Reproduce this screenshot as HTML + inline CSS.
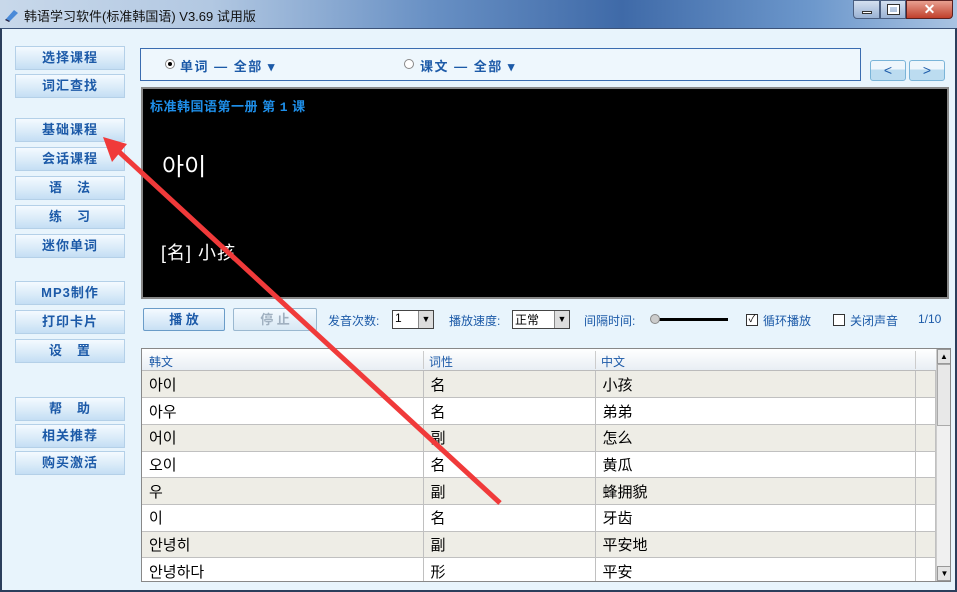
<!DOCTYPE html>
<html><head><meta charset="utf-8"><style>
*{margin:0;padding:0;box-sizing:border-box}
body{width:957px;height:592px;overflow:hidden;position:relative;font-family:"Liberation Sans","Noto Sans CJK SC",sans-serif;background:#e8f4fc}
.title{position:absolute;left:0;top:0;width:957px;height:29px;background:linear-gradient(90deg,#c8d8ea 0%,#b2c8e2 22%,#6890c4 45%,#3f6aa8 65%,#6d98cc 85%,#a9c3e2 100%)}
.title span{position:absolute;left:24px;top:6px;font-size:13px;color:#111}
.frame{position:absolute;left:0;top:28px;width:957px;height:564px;border:2px solid #2b3e5c;border-top:1px solid #3b5278;background:#e8f4fc}
.btn{position:absolute;left:15px;width:110px;height:24px;border:1px solid #b4d0e8;background:linear-gradient(#f4faff,#d8eaf8 60%,#c4def4);color:#1c5aa8;font-weight:bold;font-size:13px;text-align:center;line-height:22px;letter-spacing:1px}
.abs{position:absolute}
.blk{position:absolute;left:141px;top:87px;width:808px;height:212px;background:#000;border:2px solid #888}
table{border-collapse:collapse;font-size:15px}
td{height:26.7px;border-bottom:1px solid #c0c0c0;border-right:1px solid #c0c0c0;padding-left:7px}
tr:nth-child(odd) td{background:#eeede6}
tr:nth-child(even) td{background:#fff}
</style></head><body>
<div class="title"><svg class="abs" style="left:4px;top:7px" width="16" height="16"><path d="M2 12 L10 3 L14 6 L6 14Z" fill="#4a8ad8"/><path d="M2 12 L6 14 L5 15 L1 13Z" fill="#224"/></svg><span>韩语学习软件(标准韩国语) V3.69 试用版</span>
<div class="abs" style="left:853px;top:0;width:27px;height:19px;border:1px solid #4a5e80;border-radius:0 0 0 4px;background:linear-gradient(#d4e0f0,#9ab2d4)"><div class="abs" style="left:8px;top:10px;width:10px;height:3px;background:#fff;border:1px solid #333"></div></div>
<div class="abs" style="left:880px;top:0;width:26px;height:19px;border:1px solid #4a5e80;background:linear-gradient(#d4e0f0,#9ab2d4)"><div class="abs" style="left:7px;top:4px;width:11px;height:9px;border:2px solid #fff;outline:1px solid #333"></div></div>
<div class="abs" style="left:906px;top:0;width:47px;height:19px;border:1px solid #5a2020;border-radius:0 0 4px 0;background:linear-gradient(#e8a090,#c0402c);color:#fff;font-weight:bold;text-align:center;font-size:14px;line-height:17px">✕</div>
</div>
<div class="frame"></div>
<div class="btn" style="top:46px">选择课程</div>
<div class="btn" style="top:74px">词汇查找</div>
<div class="btn" style="top:118px">基础课程</div>
<div class="btn" style="top:147px">会话课程</div>
<div class="btn" style="top:176px">语　法</div>
<div class="btn" style="top:205px">练　习</div>
<div class="btn" style="top:234px">迷你单词</div>
<div class="btn" style="top:281px">MP3制作</div>
<div class="btn" style="top:310px">打印卡片</div>
<div class="btn" style="top:339px">设　置</div>
<div class="btn" style="top:397px">帮　助</div>
<div class="btn" style="top:424px">相关推荐</div>
<div class="btn" style="top:451px">购买激活</div>

<div class="abs" style="left:140px;top:48px;width:721px;height:33px;border:1px solid #3a6cb0;background:#eef7fd"></div>
<div class="abs" style="left:165px;top:59px;width:10px;height:10px;border:1px solid #888;border-radius:50%;background:#fff"><div class="abs" style="left:2px;top:2px;width:4px;height:4px;border-radius:50%;background:#000"></div></div>
<div class="abs" style="left:180px;top:56px;font-size:13px;font-weight:bold;color:#1c5aa8;letter-spacing:1.5px">单词 — 全部 ▾</div>
<div class="abs" style="left:404px;top:59px;width:10px;height:10px;border:1px solid #888;border-radius:50%;background:#fff"></div>
<div class="abs" style="left:420px;top:56px;font-size:13px;font-weight:bold;color:#1c5aa8;letter-spacing:1.5px">课文 — 全部 ▾</div>
<div class="abs" style="left:870px;top:60px;width:36px;height:21px;border:1px solid #7ab4d8;border-radius:3px;background:linear-gradient(#eef6fc 45%,#bcdcf0 46%);color:#1c5aa8;text-align:center;font-size:14px;line-height:19px">&lt;</div>
<div class="abs" style="left:909px;top:60px;width:36px;height:21px;border:1px solid #7ab4d8;border-radius:3px;background:linear-gradient(#eef6fc 45%,#bcdcf0 46%);color:#1c5aa8;text-align:center;font-size:14px;line-height:19px">&gt;</div>

<div class="blk">
<div class="abs" style="left:7px;top:7px;color:#1e8ee8;font-weight:bold;font-size:13px;letter-spacing:0.5px">标准韩国语第一册 第 <span style="font-family:'Liberation Mono',monospace">1</span> 课</div>
<div class="abs" style="left:19px;top:58px;color:#fff;font-size:24px">아이</div>
<div class="abs" style="left:18px;top:150px;color:#fff;font-size:18px;letter-spacing:1px">[名] 小孩</div>
</div>

<div class="abs" style="left:143px;top:308px;width:82px;height:23px;border:1px solid #6a9cc8;border-radius:2px;background:linear-gradient(#f4faff,#c8e0f4);color:#1c5aa8;font-weight:bold;font-size:13px;text-align:center;line-height:21px">播 放</div>
<div class="abs" style="left:233px;top:308px;width:84px;height:23px;border:1px solid #9ab8d0;border-radius:2px;background:linear-gradient(#f4faff,#d8e8f4);color:#a0b0c0;font-weight:bold;font-size:13px;text-align:center;line-height:21px">停 止</div>
<div class="abs" style="left:328px;top:312px;font-size:12px;color:#1c5aa8">发音次数:</div>
<div class="abs" style="left:392px;top:310px;width:42px;height:19px;border:1px solid #444;background:#fff;font-size:12px;padding-left:2px">1<div class="abs" style="right:0;top:0;width:15px;height:17px;background:#ddd;border-left:1px solid #888;font-size:9px;text-align:center;line-height:17px">▼</div></div>
<div class="abs" style="left:449px;top:312px;font-size:12px;color:#1c5aa8">播放速度:</div>
<div class="abs" style="left:512px;top:310px;width:58px;height:19px;border:1px solid #444;background:#fff;font-size:12px;padding-left:2px">正常<div class="abs" style="right:0;top:0;width:15px;height:17px;background:#ddd;border-left:1px solid #888;font-size:9px;text-align:center;line-height:17px">▼</div></div>
<div class="abs" style="left:584px;top:312px;font-size:12px;color:#1c5aa8">间隔时间:</div>
<div class="abs" style="left:653px;top:318px;width:75px;height:3px;background:#000"></div>
<div class="abs" style="left:650px;top:314px;width:10px;height:10px;border-radius:50%;background:#ccc;border:1px solid #888"></div>
<div class="abs" style="left:746px;top:314px;width:12px;height:12px;border:1px solid #333;background:#fff;font-size:10px;line-height:10px;text-align:center">✓</div>
<div class="abs" style="left:763px;top:312px;font-size:12px;color:#1c5aa8">循环播放</div>
<div class="abs" style="left:833px;top:314px;width:12px;height:12px;border:1px solid #333;background:#fff"></div>
<div class="abs" style="left:850px;top:312px;font-size:12px;color:#1c5aa8">关闭声音</div>
<div class="abs" style="left:918px;top:312px;font-size:12px;color:#1c5aa8">1/10</div>

<div class="abs" style="left:141px;top:348px;width:810px;height:234px;border:1px solid #888;background:#fff;overflow:hidden">
<div style="height:22px;background:linear-gradient(#fff,#e8eef4);border-bottom:1px solid #bbb;font-size:12px;color:#1c5aa8;position:relative">
<span class="abs" style="left:7px;top:4px">韩文</span><span class="abs" style="left:287px;top:4px">词性</span><span class="abs" style="left:459px;top:4px">中文</span>
<div class="abs" style="left:281px;top:2px;width:1px;height:18px;background:#ccc"></div><div class="abs" style="left:453px;top:2px;width:1px;height:18px;background:#ccc"></div><div class="abs" style="left:773px;top:2px;width:1px;height:18px;background:#ccc"></div></div>
<table style="width:794px"><colgroup><col style="width:281px"><col style="width:172px"><col style="width:320px"><col></colgroup>
<tr><td>아이</td><td>名</td><td>小孩</td><td></td></tr>
<tr><td>아우</td><td>名</td><td>弟弟</td><td></td></tr>
<tr><td>어이</td><td>副</td><td>怎么</td><td></td></tr>
<tr><td>오이</td><td>名</td><td>黄瓜</td><td></td></tr>
<tr><td>우</td><td>副</td><td>蜂拥貌</td><td></td></tr>
<tr><td>이</td><td>名</td><td>牙齿</td><td></td></tr>
<tr><td>안녕히</td><td>副</td><td>平安地</td><td></td></tr>
<tr><td>안녕하다</td><td>形</td><td>平安</td><td></td></tr>
</table>
<div class="abs" style="left:794px;top:0;width:15px;height:232px;background:#f0f0f0;border-left:1px solid #ccc"><div style="height:15px;background:#e4e4e4;border:1px solid #999;font-size:8px;text-align:center;line-height:13px">▲</div><div style="height:62px;background:#e8e8e8;border:1px solid #aaa"></div><div class="abs" style="bottom:0;width:15px;height:15px;background:#e4e4e4;border:1px solid #999;font-size:8px;text-align:center;line-height:13px">▼</div></div>
</div>

<svg class="abs" style="left:0;top:0" width="957" height="592"><path d="M500 503 L116 149" stroke="#f03a3a" stroke-width="5" fill="none"/><polygon points="103,137 127,144 112,162" fill="#f03a3a"/></svg>
</body></html>
